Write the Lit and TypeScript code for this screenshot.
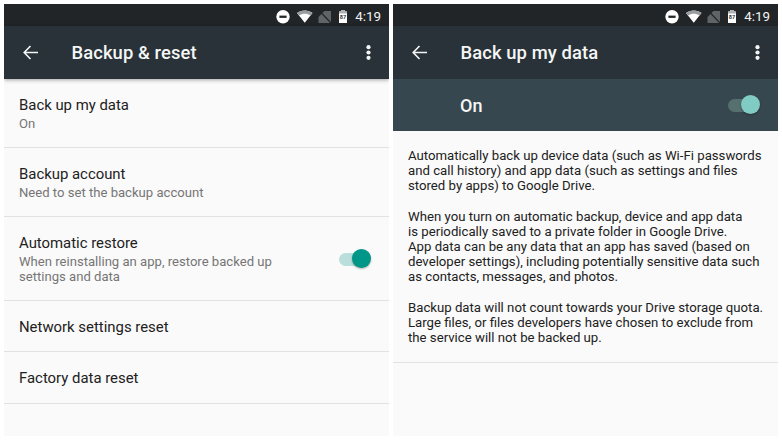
import { LitElement, html, css, svg } from "lit";
import { customElement } from "lit/decorators.js";

const statusIcons = svg`
  <circle cx="7" cy="6.7" r="6.7" fill="#fff"></circle>
  <rect x="3.4" y="5.6" width="7.2" height="2.3" fill="#22272a"></rect>
  <path d="M21 3 C25 -.4 32.500 -.4 36.500 3 L28.750 12.800 Z" fill="#fff"></path>
  <path d="M21 3 C25 -.4 32.500 -.4 36.500 3 L34.500 5.500 C31 3 26.500 3 23 5.500 Z" fill="#9a9d9f"></path>
  <path d="M42.500 13 L55 13 L55 1 L48.500 1 L42.500 7 Z" fill="#5f6466"></path>
  <path d="M43 .5 L55.500 13.500" stroke="#22272a" stroke-width="1.2"></path>
  <path d="M63 1.500 L65.200 1.500 L65.200 0 L68.800 0 L68.800 1.500 L71 1.500 L71 13 L63 13 Z" fill="#fff"></path>
  <path d="M63 1.500 L65.200 1.500 L65.200 0 L68.800 0 L68.800 1.500 L71 1.500 L71 3.500 L63 3.500 Z" fill="#aeb0b1"></path>
  <text x="67" y="9.300" text-anchor="middle" font-size="5.500" font-weight="700" fill="#2c3033" font-family="Roboto, sans-serif">87</text>
`;

@customElement("app-root")
export class AppRoot extends LitElement {
  static styles = css`
    :host {
      display: block;
      width: 782px;
      height: 440px;
      background: #fff;
      font-family: Roboto, "Noto Sans", sans-serif;
      overflow: hidden;
    }
    .page {
      display: grid;
      grid-template-columns: 385px 385px;
      gap: 4px;
      padding: 4px;
      height: 432px;
    }
    .screen {
      background: #fafafa;
      display: flex;
      flex-direction: column;
      height: 432px;
      overflow: hidden;
    }
    .status {
      height: 22px;
      flex: none;
      background: #212528;
      display: flex;
      align-items: center;
      justify-content: flex-end;
      gap: 8px;
      padding-right: 8px;
      color: #f2f3f3;
      font-size: 13.400px;
      font-weight: 400;
      box-sizing: border-box;
      padding-top: 2px;
    }
    .status svg { width: 71px; height: 13px; flex: none; overflow: visible; }
    .bar {
      height: 53px;
      flex: none;
      background: #283238;
      display: flex;
      align-items: center;
      color: #f5f6f6;
      position: relative;
      z-index: 1;
    }
    .shadow { box-shadow: 0 1px 4px rgba(0,0,0,.35); }
    .back { width: 15px; height: 15px; margin-left: 19px; flex: none; }
    .title {
      margin-left: 33.500px;
      flex: 1;
      font-size: 18.400px;
      font-weight: 500;
      letter-spacing: 0.1px;
    }
    .dots { width: 5px; height: 15px; margin-right: 18.500px; flex: none; }
    .row {
      box-sizing: border-box;
      padding: 0 15px;
      border-bottom: 1px solid #e2e2e2;
      display: flex;
      align-items: center;
      justify-content: space-between;
      flex: none;
    }
    .primary { font-size: 14.900px; color: #212121; line-height: 18px; }
    .secondary { font-size: 13.100px; color: #757575; line-height: 15px; margin-top: 2px; }
    .r1, .r2 { height: 69px; padding-top: 1px; }
    .r3 { height: 84px; padding-top: 1px; }
    .r4 { height: 51px; padding-top: 1px; }
    .r5 { height: 52px; }
    .r3 .text { width: 300px; }
    .switch { position: relative; width: 32px; height: 20px; flex: none; margin-right: 3px; }
    .track {
      position: absolute;
      left: 0; top: 3.500px;
      width: 28px; height: 13px;
      border-radius: 7px;
      background: #b9dedb;
    }
    .thumb {
      position: absolute;
      right: 0; top: 0;
      width: 19px; height: 19px;
      border-radius: 50%;
      background: #009688;
      box-shadow: 0 1px 2px rgba(0,0,0,.3);
    }
    .on {
      height: 52px;
      flex: none;
      background: #37474f;
      display: flex;
      align-items: center;
      justify-content: space-between;
      padding: 0 15px 0 67px;
      color: #f5f6f6;
      font-size: 18px;
      font-weight: 500;
    }
    .on .track { background: #56706f; }
    .on .thumb { background: #80cbc4; }
    .body {
      box-sizing: border-box;
      padding: 17px 15px 0;
      height: 232px;
      flex: none;
      border-bottom: 1px solid #e2e2e2;
      font-size: 13.200px;
      line-height: 15.200px;
      color: #212121;
    }
    .body p { margin: 0 0 15px; white-space: nowrap; }
  `;

  private chrome(title: string, shadow: boolean) {
    return html`
      <div class="status">
        <svg viewBox="0 0 71 13">${statusIcons}</svg>
        <span>4:19</span>
      </div>
      <div class="bar ${shadow ? "shadow" : ""}">
        <svg class="back" viewBox="0 0 15 15" fill="none" stroke="#f5f6f6" stroke-width="1.600">
          <path d="M15 7.500 H1.200 M7.500 1 L1.200 7.500 L7.500 14"></path>
        </svg>
        <div class="title">${title}</div>
        <svg class="dots" viewBox="0 0 5 15" fill="#f5f6f6">
          <circle cx="2.500" cy="2.200" r="2.100"></circle>
          <circle cx="2.500" cy="7.500" r="2.100"></circle>
          <circle cx="2.500" cy="12.800" r="2.100"></circle>
        </svg>
      </div>
    `;
  }

  private sw() {
    return html`<div class="switch"><div class="track"></div><div class="thumb"></div></div>`;
  }

  render() {
    return html`
      <div class="page">
        <section class="screen">
          ${this.chrome("Backup & reset", true)}
          <div class="row r1"><div class="text"><div class="primary">Back up my data</div><div class="secondary">On</div></div></div>
          <div class="row r2"><div class="text"><div class="primary">Backup account</div><div class="secondary">Need to set the backup account</div></div></div>
          <div class="row r3"><div class="text"><div class="primary">Automatic restore</div><div class="secondary">When reinstalling an app, restore backed up<br />settings and data</div></div>${this.sw()}</div>
          <div class="row r4"><div class="primary">Network settings reset</div></div>
          <div class="row r5"><div class="primary">Factory data reset</div></div>
        </section>
        <section class="screen">
          ${this.chrome("Back up my data", false)}
          <div class="on"><span>On</span>${this.sw()}</div>
          <div class="body">
            <p>Automatically back up device data (such as Wi-Fi passwords<br />and call history) and app data (such as settings and files<br />stored by apps) to Google Drive.</p>
            <p>When you turn on automatic backup, device and app data<br />is periodically saved to a private folder in Google Drive.<br />App data can be any data that an app has saved (based on<br />developer settings), including potentially sensitive data such<br />as contacts, messages, and photos.</p>
            <p>Backup data will not count towards your Drive storage quota.<br />Large files, or files developers have chosen to exclude from<br />the service will not be backed up.</p>
          </div>
        </section>
      </div>
    `;
  }
}
